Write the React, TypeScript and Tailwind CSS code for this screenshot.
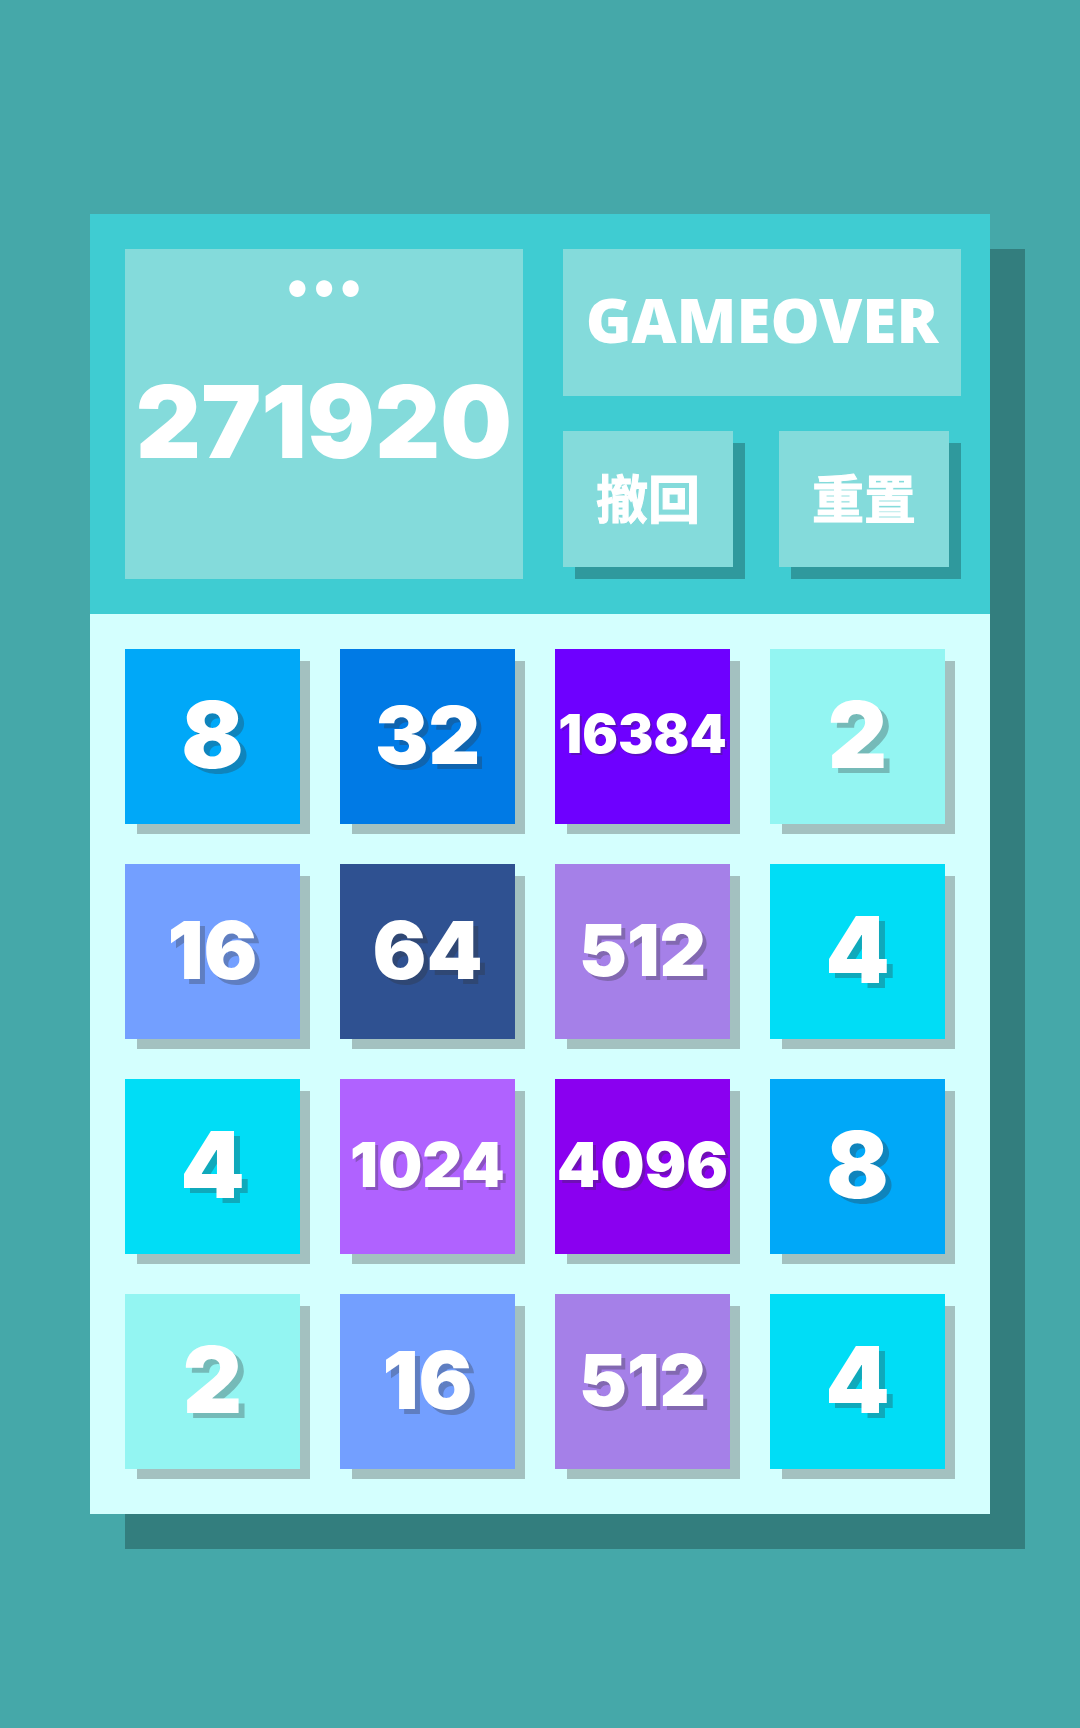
import clsx from 'clsx'

const board = [
  [8, 32, 16384, 2],
  [16, 64, 512, 4],
  [4, 1024, 4096, 8],
  [2, 16, 512, 4],
]

const tileColors: Record<number, string> = {
  2: 'bg-[#93f5f2]',
  4: 'bg-[#00ddf6]',
  8: 'bg-[#00a8f8]',
  16: 'bg-[#739fff]',
  32: 'bg-[#007ae5]',
  64: 'bg-[#2f5191]',
  512: 'bg-[#a580e8]',
  1024: 'bg-[#b062ff]',
  4096: 'bg-[#8a00f0]',
  16384: 'bg-[#6e00ff]',
}

// longer numbers get a smaller font and a shorter shadow
const tileSizes: Record<number, string> = {
  1: 'text-[92px] [text-shadow:6px_5px_0_rgba(50,50,50,0.3)]',
  2: 'text-[80px] [text-shadow:5px_5px_0_rgba(50,50,50,0.3)]',
  3: 'text-[72px] [text-shadow:4px_4px_0_rgba(50,50,50,0.3)]',
  4: 'text-[62px] [text-shadow:3px_3px_0_rgba(50,50,50,0.3)]',
  5: 'text-[53px] [text-shadow:2px_2px_0_rgba(50,50,50,0.3)]',
}

function Tile({ value }: { value: number }) {
  return (
    <div
      className={clsx(
        'flex aspect-square items-center justify-center pb-1 font-[Inter,sans-serif] leading-none shadow-[11px_11px_0_-1px_rgba(50,50,50,0.3)]',
        tileColors[value],
        tileSizes[String(value).length],
      )}
    >
      {value}
    </div>
  )
}

function GameButton({ label }: { label: string }) {
  return (
    <button
      type="button"
      className="h-[136px] cursor-pointer bg-[#84dbdb] text-[52px] leading-none font-bold shadow-[12px_12px_0_rgba(0,0,0,0.25)] [-webkit-text-stroke:1px_white]"
    >
      {label}
    </button>
  )
}

export default function App() {
  return (
    <div className="flex min-h-screen items-center justify-center bg-[#45a8a9] font-['Noto_Sans','Noto_Sans_CJK_SC',sans-serif] font-black text-white">
      <main className="w-5/6 shadow-[35px_35px_0_rgba(0,0,0,0.25)]">
        <header className="grid grid-cols-2 gap-10 bg-[#3fccd2] py-[35px] pr-[29px] pl-[35px]">
          <section className="flex flex-col items-center bg-[#84dbdb]">
            <div className="h-28 font-['Noto_Sans_CJK_SC',sans-serif] text-[76px] leading-[28px]">...</div>
            <div className="font-[Inter,sans-serif] text-[101px] leading-[120px]">271920</div>
          </section>
          <div className="flex flex-col gap-[35px] pb-3">
            <h1 className="flex h-[147px] items-center justify-center bg-[#84dbdb] pb-2 text-[62px] leading-none">
              GAMEOVER
            </h1>
            <div className="grid grid-cols-2 gap-[46px] pr-3">
              <GameButton label="撤回" />
              <GameButton label="重置" />
            </div>
          </div>
        </header>
        <div className="grid grid-cols-4 gap-10 bg-[#d4fffe] pt-[35px] pr-[45px] pb-[45px] pl-[35px]">
          {board.flat().map((value, i) => (
            <Tile key={i} value={value} />
          ))}
        </div>
      </main>
    </div>
  )
}
